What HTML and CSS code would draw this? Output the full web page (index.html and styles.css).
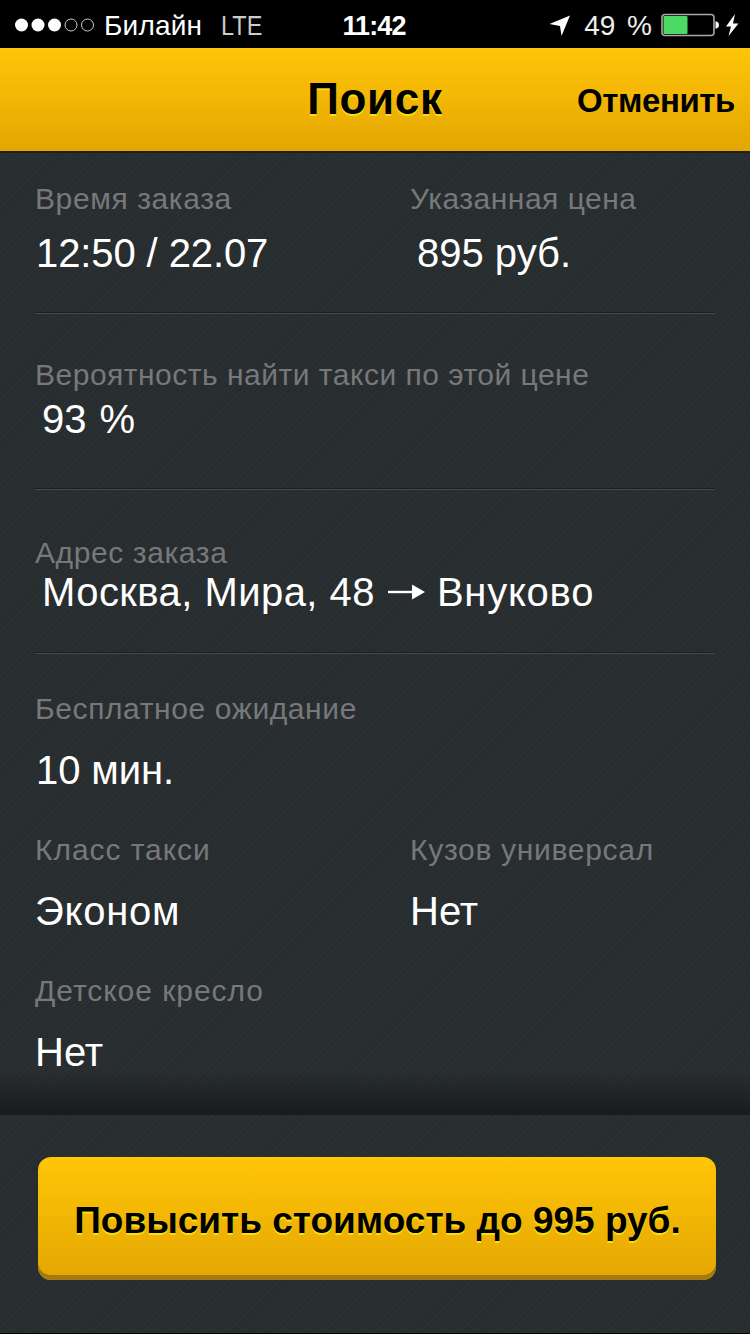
FILE: index.html
```html
<!DOCTYPE html>
<html lang="ru">
<head>
    <meta charset="UTF-8">
    <meta name="viewport" content="width=device-width, initial-scale=1.0">
    <title>Поиск</title>
    <link rel="stylesheet" href="styles.css">
</head>
<body>
    <div class="status-bar">
        <div class="status-left">
            <svg class="signal" width="80" height="16" viewBox="0 0 80 16">
                <circle cx="6.5" cy="8" r="6.5" fill="#fff"/>
                <circle cx="23" cy="8" r="6.5" fill="#fff"/>
                <circle cx="39.5" cy="8" r="6.5" fill="#fff"/>
                <circle cx="56" cy="8" r="6" fill="none" stroke="#ccc"/>
                <circle cx="72.5" cy="8" r="6" fill="none" stroke="#ccc"/>
            </svg>
            <span class="carrier">Билайн</span>
            <span class="network">LTE</span>
        </div>
        <div class="clock">11:42</div>
        <div class="status-right">
            <svg class="location" width="22" height="22" viewBox="0 0 22 22">
                <path d="M21 0.5L12.5 21L11 11L0.5 9Z" fill="#fff"/>
            </svg>
            <span class="charge">49 %</span>
            <svg class="battery" width="78" height="24" viewBox="0 0 78 24">
                <rect x="1" y="1.5" width="52" height="21" rx="3" fill="none" stroke="#a8a8a8" stroke-width="1.6"/>
                <rect x="2.5" y="3" width="24" height="18" rx="1" fill="#4cd964"/>
                <path d="M54.5 8.2Q58 9 58 12Q58 15 54.5 15.8Z" fill="#fff"/>
                <path d="M74 1L65 13.5H70L67.5 23L77.5 10.5H72Z" fill="#fff"/>
            </svg>
        </div>
    </div>

    <header class="navbar">
        <h1>Поиск</h1>
        <a class="cancel">Отменить</a>
    </header>

    <main class="order">
        <section class="row row-time">
            <div class="field">
                <div class="label">Время заказа</div>
                <div class="value digits">12:50 / 22.07</div>
            </div>
            <div class="field">
                <div class="label label-tight">Указанная цена</div>
                <div class="value indent">895 руб.</div>
            </div>
        </section>
        <section class="row row-chance">
            <div class="field wide">
                <div class="label label-tight">Вероятность найти такси по этой цене</div>
                <div class="value percent indent">93 %</div>
            </div>
        </section>
        <section class="row row-address">
            <div class="field wide">
                <div class="label">Адрес заказа</div>
                <div class="value indent">
                    <span class="from">Москва, Мира, 48</span>
                    <svg class="arrow" width="37" height="18" viewBox="0 0 37 18">
                        <path d="M0 9H26" stroke="#fff" stroke-width="2.4"/>
                        <path d="M24 1.5L37 9L24 16.5Z" fill="#fff"/>
                    </svg>
                    <span class="to">Внуково</span>
                </div>
            </div>
        </section>
        <section class="options">
            <div class="field wide">
                <div class="label">Бесплатное ожидание</div>
                <div class="value digits">10 мин.</div>
            </div>
            <div class="field">
                <div class="label label-loose">Класс такси</div>
                <div class="value to">Эконом</div>
            </div>
            <div class="field">
                <div class="label label-wagon">Кузов универсал</div>
                <div class="value">Нет</div>
            </div>
            <div class="field">
                <div class="label label-loose">Детское кресло</div>
                <div class="value">Нет</div>
            </div>
        </section>
    </main>

    <footer class="bottom">
        <button type="button" class="raise">Повысить стоимость до 995 руб.</button>
    </footer>
</body>
</html>
```

FILE: styles.css
```css
* {
    box-sizing: border-box;
}
body {
    margin: 0;
    height: 1334px;
    display: flex;
    flex-direction: column;
    overflow: hidden;
    font-family: "Liberation Sans", Arial, sans-serif;
    color: #fff;
    background: repeating-linear-gradient(135deg, #272c2f 0, #272c2f 2px, #2a2f32 2px, #2a2f32 4px);
}

/* status bar */
.status-bar {
    height: 48px;
    padding: 2px 11px 0 15px;
    display: grid;
    grid-template-columns: 1fr auto 1fr;
    align-items: center;
    background: #000;
    font-size: 28px;
    line-height: 44px;
    white-space: nowrap;
}
.status-left, .status-right {
    display: flex;
    align-items: center;
}
.status-right {
    justify-content: flex-end;
}
.carrier, .network, .clock, .charge {
    padding-top: 2px;
}
.carrier {
    margin-left: 9px;
    letter-spacing: 0.2px;
}
.network {
    margin-left: 19px;
    transform: scaleX(0.84);
    transform-origin: left;
    color: #ccc;
}
.clock {
    margin-right: 6px;
    font-weight: bold;
    font-size: 27px;
    letter-spacing: -0.9px;
}
.charge {
    margin: 0 9px 0 13px;
    word-spacing: 4px;
    color: #eee;
}
.location {
    margin-top: 2px;
}

/* header */
.navbar {
    height: 105px;
    padding: 0 15px;
    display: grid;
    grid-template-columns: 1fr auto 1fr;
    align-items: center;
    color: #000;
    background: linear-gradient(#ffc507, #e4a602);
    border-bottom: 2px solid #241f14;
}
.navbar h1 {
    grid-column: 2;
    margin: -2px 0 0;
    font-size: 44px;
    line-height: 50px;
    letter-spacing: 0.7px;
    text-shadow: 0 2px 0 #f5e010;
}
.cancel {
    justify-self: end;
    margin-top: 3px;
    font-size: 33px;
    font-weight: bold;
    letter-spacing: -0.4px;
}

/* order details */
.order {
    height: 962px;
    padding: 31px 35px 0;
    background: linear-gradient(transparent 918px, rgba(0, 0, 0, .4) 962px);
}
.row {
    display: grid;
    grid-template-columns: 375px 1fr;
    border-bottom: 1px solid #454a4d;
    box-shadow: inset 0 -1px 0 #1a1e20;
}
.field {
    white-space: nowrap;
}
.label {
    font-size: 30px;
    line-height: 30px;
    letter-spacing: 0.6px;
    color: #77787a;
}
.label-tight {
    letter-spacing: 0.5px;
}
.label-wagon {
    letter-spacing: 0.7px;
}
.label-loose {
    letter-spacing: 0.95px;
}
.value {
    font-size: 40px;
    line-height: 40px;
}
.digits {
    padding-left: 1px;
    letter-spacing: -0.1px;
}
.percent {
    word-spacing: 2px;
}
.indent {
    padding-left: 7px;
}
.row-time {
    height: 130px;
}
.row-time .value {
    margin-top: 19px;
}
.row-chance {
    height: 176px;
    padding-top: 46px;
}
.row-chance .value {
    margin-top: 9px;
}
.row-address {
    height: 164px;
    padding-top: 48px;
}
.row-address .value {
    margin-top: 4px;
    display: flex;
    align-items: center;
}
.from {
    letter-spacing: 0.45px;
}
.to {
    letter-spacing: 0.75px;
}
.arrow {
    flex-shrink: 0;
    margin: 0 12px 0 13px;
}
.options {
    padding-top: 40px;
    display: grid;
    grid-template-columns: 375px 1fr;
    row-gap: 45px;
}
.options .value {
    margin-top: 26px;
}
.wide {
    grid-column: span 2;
}

/* bottom panel */
.bottom {
    height: 219px;
    padding: 42px 34px 0 38px;
    border-bottom: 1px solid #000;
}
.raise {
    width: 100%;
    height: 123px;
    padding: 5px 0 0 1px;
    border: none;
    border-radius: 13px;
    font: bold 37px "Liberation Sans", Arial, sans-serif;
    color: #000;
    white-space: nowrap;
    text-shadow: 0 2px 0 #f5e010;
    background: linear-gradient(#ffc507, #e4a602);
    box-shadow: inset 0 -5px 0 #a37a10;
}
```
